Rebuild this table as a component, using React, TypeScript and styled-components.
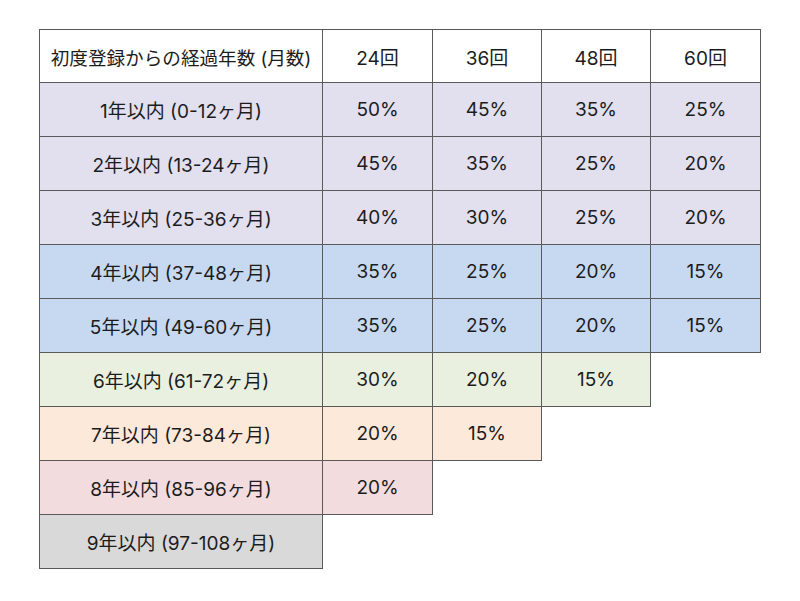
import React from "react";
import styled, { createGlobalStyle } from "styled-components";

const Global = createGlobalStyle`
  html, body { margin: 0; padding: 0; background: #fff; }
  body { font-family: Inter, "Noto Sans CJK JP", sans-serif; color: #1c1c1c; }
`;

const Page = styled.div`
  padding: 29px 0 0 39px;
`;

const Grid = styled.div`
  display: grid;
  grid-template-columns: 284px 110px 109px 109px 110px;
  grid-auto-rows: 54px;
  width: max-content;
`;

const Cell = styled.div<{ $bg: string; $top?: boolean; $left?: boolean; $size?: number }>`
  box-sizing: border-box;
  display: flex;
  align-items: center;
  justify-content: center;
  background: ${(p) => p.$bg};
  border-right: 1px solid #5a5a5a;
  border-bottom: 1px solid #5a5a5a;
  border-top: ${(p) => (p.$top ? "1px solid #5a5a5a" : "none")};
  border-left: ${(p) => (p.$left ? "1px solid #5a5a5a" : "none")};
  font-size: ${(p) => p.$size ?? 19}px;
  white-space: nowrap;
`;

const Empty = styled.div``;

const headers = ["初度登録からの経過年数 (月数)", "24回", "36回", "48回", "60回"];

const rows: { label: string; values: string[]; bg: string }[] = [
  { label: "1年以内 (0-12ヶ月)", values: ["50%", "45%", "35%", "25%"], bg: "#e2dfee" },
  { label: "2年以内 (13-24ヶ月)", values: ["45%", "35%", "25%", "20%"], bg: "#e2dfee" },
  { label: "3年以内 (25-36ヶ月)", values: ["40%", "30%", "25%", "20%"], bg: "#e2dfee" },
  { label: "4年以内 (37-48ヶ月)", values: ["35%", "25%", "20%", "15%"], bg: "#c7d9f1" },
  { label: "5年以内 (49-60ヶ月)", values: ["35%", "25%", "20%", "15%"], bg: "#c7d9f1" },
  { label: "6年以内 (61-72ヶ月)", values: ["30%", "20%", "15%"], bg: "#e9f0df" },
  { label: "7年以内 (73-84ヶ月)", values: ["20%", "15%"], bg: "#fde9da" },
  { label: "8年以内 (85-96ヶ月)", values: ["20%"], bg: "#f2dcdd" },
  { label: "9年以内 (97-108ヶ月)", values: [], bg: "#d9d9d9" },
];

export default function App() {
  return (
    <Page>
      <Global />
      <Grid>
        {headers.map((h, i) => (
          <Cell key={h} $bg="#fff" $top $left={i === 0} $size={i === 0 ? 18.6 : 19}>
            {h}
          </Cell>
        ))}
        {rows.map((r) => (
          <React.Fragment key={r.label}>
            <Cell $bg={r.bg} $left>
              {r.label}
            </Cell>
            {r.values.map((v, i) => (
              <Cell key={i} $bg={r.bg}>
                {v}
              </Cell>
            ))}
            {Array.from({ length: 4 - r.values.length }).map((_, i) => (
              <Empty key={"e" + i} />
            ))}
          </React.Fragment>
        ))}
      </Grid>
    </Page>
  );
}
